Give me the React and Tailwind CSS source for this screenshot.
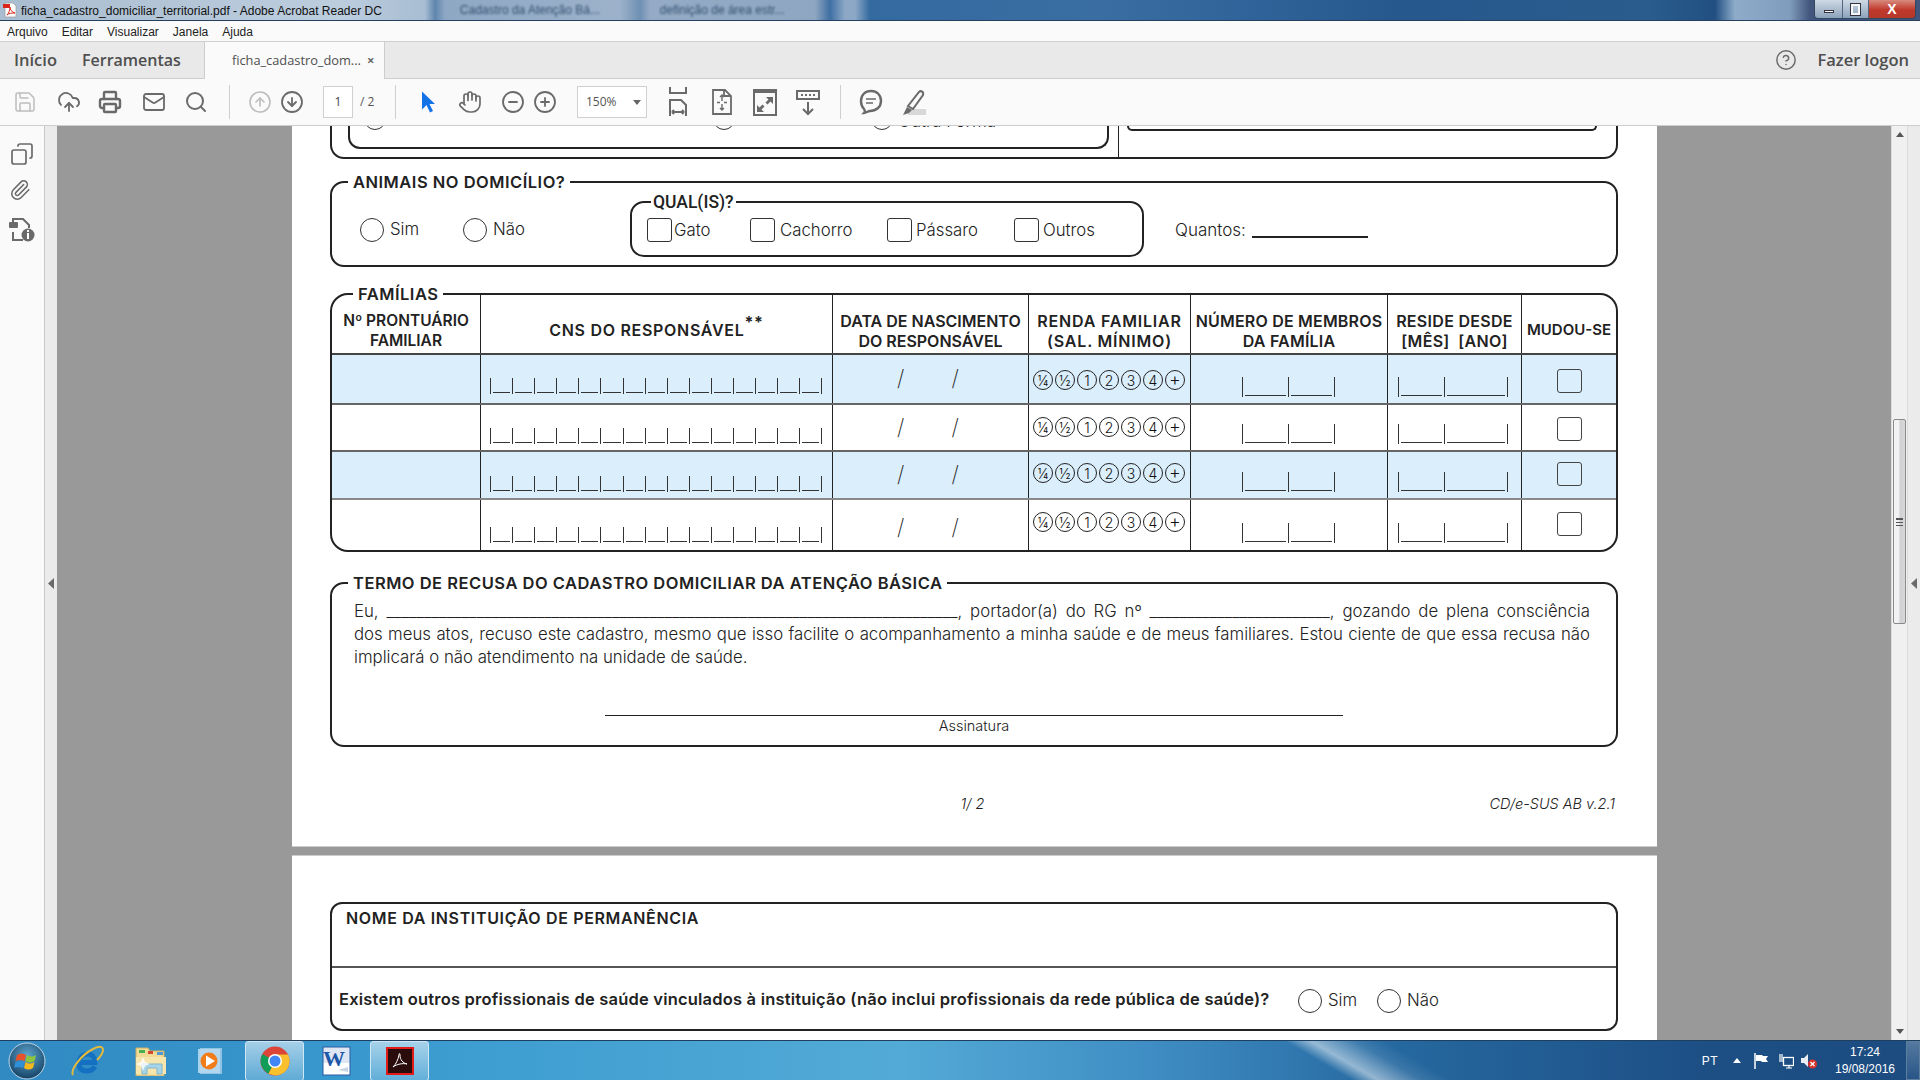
import {
  Save, CloudUpload, Printer, Mail, Search, CircleArrowUp, CircleArrowDown, Hand,
  CircleMinus, CirclePlus, CircleHelp, Copy, Paperclip,
} from 'lucide-react';

const TB = 'text-[#6a6a6a] shrink-0';

// linhas da tabela de famílias
const ROWS = [
  { bg: 'bg-[#dbeefc]', h: 'h-[50px] border-b-2 border-[#666]', cns: 'pb-[9px]', tick: 'pb-[6px]', slash: 'pt-[12px]', circ: 'pt-[15px]', check: 'pt-[14px]' },
  { bg: '', h: 'h-[47px] border-b-2 border-[#666]', cns: 'pb-[6px]', tick: 'pb-[6px]', slash: 'pt-[11px]', circ: 'pt-[12px]', check: 'pt-[12px]' },
  { bg: 'bg-[#dbeefc]', h: 'h-[48px] border-b-2 border-[#888]', cns: 'pb-[6px]', tick: 'pb-[6px]', slash: 'pt-[11px]', circ: 'pt-[11px]', check: 'pt-[10px]' },
  { bg: '', h: 'h-[50px]', cns: 'pb-[7px]', tick: 'pb-[7px]', slash: 'pt-[16px]', circ: 'pt-[12px]', check: 'pt-[12px]' },
];

const COLS = 'grid grid-cols-[149px_352px_196px_162px_197px_134px_94px]';
const CELL = 'border-r border-[#222]';

function Radio({ label, className = '' }) {
  return (
    <div className={`flex items-center shrink-0 ${className}`}>
      <span className="w-[24px] h-[24px] rounded-full border border-[#333] shrink-0" />
      {label && <span className="ml-[6px] text-[16.8px] font-light text-[#222]">{label}</span>}
    </div>
  );
}

function Check({ label, className = '', gap = 'ml-[4px]' }) {
  return (
    <div className={`flex items-center shrink-0 ${className}`}>
      <span className="w-[25px] h-[24px] rounded-[3px] border border-[#333] shrink-0" />
      {label && <span className={`${gap} text-[16.8px] font-light text-[#222] translate-y-px`}>{label}</span>}
    </div>
  );
}

function Ticks({ widths, height }) {
  return (
    <div className={`flex border-r border-[#333] ${height}`}>
      {widths.map((w, i) => (
        <span key={i} className="border-l border-[#333] flex items-end px-[2px] pb-[1px]" style={{ width: w }}>
          <span className="block h-px w-full bg-[#333]" />
        </span>
      ))}
    </div>
  );
}

function Legend({ children, className = '' }) {
  return (
    <legend className={`h-[18px] leading-[18px] text-[16.5px] font-semibold text-[#222] tracking-[0.5px] px-[5px] whitespace-nowrap ${className}`}>
      {children}
    </legend>
  );
}

function HeadCell({ children, className = '' }) {
  return (
    <div className={`text-center leading-[20px] font-semibold text-[#222] whitespace-nowrap ${className}`}>
      {children}
    </div>
  );
}

function FamilyRow({ row }) {
  const circles = ['¼', '½', '1', '2', '3', '4', '+'];
  return (
    <div className={`${COLS} ${row.bg} ${row.h}`}>
      <div className={CELL} />
      <div className={`${CELL} flex items-end pl-[9px] ${row.cns}`}>
        <Ticks widths={Array(15).fill(22.1)} height="h-[16px]" />
      </div>
      <div className={`${CELL} flex pl-[64px] gap-[47px] text-[22px] leading-[22px] font-extralight text-[#222] ${row.slash}`}>
        <span>/</span>
        <span>/</span>
      </div>
      <div className={`${CELL} flex pl-[4px] gap-[2px] ${row.circ}`}>
        {circles.map((c) => (
          <span key={c} className={`w-[20px] h-[20px] rounded-full border border-[#222] flex items-center justify-center font-light text-[#111] ${c === '+' ? 'text-[18px] leading-none' : 'text-[14px]'}`}>
            {c}
          </span>
        ))}
      </div>
      <div className={`${CELL} flex items-end pl-[51px] ${row.tick}`}>
        <Ticks widths={[46, 46]} height="h-[20px]" />
      </div>
      <div className={`${CELL} flex items-end pl-[10px] ${row.tick}`}>
        <Ticks widths={[46, 63]} height="h-[20px]" />
      </div>
      <div className={`flex pl-[35px] ${row.check}`}>
        <span className="w-[25px] h-[24px] rounded-[3px] border border-[#444]" />
      </div>
    </div>
  );
}

function PdfIcon() {
  return (
    <svg width="14" height="16" viewBox="0 0 14 16" className="shrink-0">
      <path d="M2 1h8l3 3v11H2z" fill="#fff" stroke="#999" strokeWidth="0.7" />
      <rect x="0" y="2" width="7" height="4" fill="#d8261c" />
      <path d="M4 13c2-2 3-5 3-8 0 3 2 5 5 6-3 0-6 0-8 2z" fill="none" stroke="#d8261c" />
    </svg>
  );
}

function TitleBar() {
  return (
    <div className="h-[21px] shrink-0 flex items-center bg-[linear-gradient(90deg,#a9bdd0_0px,#bccdde_340px,#a8bdd3_425px,#5f86ad_435px,#8ea7c4_445px,#9db2ca_620px,#6f90b3_640px,#95abc5_650px,#8ea6c1_815px,#3f6fa3_830px,#8da8c6_845px,#8da8c6_855px,#336a9f_870px,#3a6ea3_1100px,#26588e_1400px,#2a5c8d_1650px,#214f82_1715px,#8eacca_1735px,#7f9cbc_1790px,#42557c_1810px)] border-b border-[#24405f] text-[12px] font-['Liberation_Sans',sans-serif] text-[#111] overflow-hidden">
      <div className="ml-[3px]"><PdfIcon /></div>
      <span className="ml-[4px] whitespace-nowrap translate-y-px">ficha_cadastro_domiciliar_territorial.pdf - Adobe Acrobat Reader DC</span>
      <span className="ml-[78px] w-[170px] whitespace-nowrap text-[#33506f] blur-[1.2px]">Cadastro da Atenção Bá...</span>
      <span className="ml-[30px] w-[150px] whitespace-nowrap text-[#33506f] blur-[1.2px]">definição de área estr...</span>
      <div className="ml-auto flex items-start self-start h-[19px] mr-[4px] rounded-b-[4px] border border-t-0 border-[#33465f] overflow-hidden">
        <span className="w-[28px] h-[18px] bg-[linear-gradient(180deg,#cfd9e4,#8ca2bb)] flex items-center justify-center border-r border-[#51657f]">
          <span className="w-[10px] h-[3px] bg-white border border-[#334] mt-[5px]" />
        </span>
        <span className="w-[26px] h-[18px] bg-[linear-gradient(180deg,#cfd9e4,#8ca2bb)] flex items-center justify-center border-r border-[#51657f]">
          <span className="w-[9px] h-[11px] bg-transparent border-2 border-[#f4f6f8] outline outline-[#334]" />
        </span>
        <span className="w-[46px] h-[18px] bg-[linear-gradient(180deg,#d88a7e,#c0392b_55%,#b5382a)] flex items-center justify-center text-white font-bold text-[14px] leading-none">X</span>
      </div>
    </div>
  );
}

function MenuBar() {
  return (
    <div className="h-[21px] shrink-0 bg-[#fafafa] border-b border-[#cfcfcf] flex items-center pl-[7px] pt-[2px] gap-[14px] text-[12px] text-[#222] font-['Liberation_Sans',sans-serif]">
      <span>Arquivo</span>
      <span>Editar</span>
      <span>Visualizar</span>
      <span>Janela</span>
      <span>Ajuda</span>
    </div>
  );
}

function TabBar() {
  return (
    <div className="h-[37px] shrink-0 bg-[#e9e9e9] border-b border-[#cdcdcd] flex items-stretch font-['Open_Sans',sans-serif] text-[#4f4f4f]">
      <span className="ml-[14px] self-center text-[16.5px] font-semibold">Início</span>
      <span className="ml-[25px] self-center text-[16px] font-semibold">Ferramentas</span>
      <div className="ml-[23px] w-[181px] h-[37px] bg-[#fafafa] border-x border-[#cdcdcd] flex items-center pl-[27px] text-[12.8px] -mb-px">
        <span className="whitespace-nowrap">ficha_cadastro_dom...</span>
        <span className="ml-[6px] text-[13px] font-bold text-[#666]">×</span>
      </div>
      <CircleHelp size={22} strokeWidth={1.6} className="ml-auto self-center text-[#6a6a6a]" />
      <span className="ml-[20px] mr-[11px] self-center text-[16.5px] font-semibold">Fazer logon</span>
    </div>
  );
}

function Sep({ className = '' }) {
  return <span className={`w-px h-[34px] bg-[#cfcfcf] shrink-0 ${className}`} />;
}

function Toolbar() {
  return (
    <div className="h-[47px] shrink-0 bg-[#fafafa] border-b border-[#cdcdcd] flex items-center font-['Open_Sans',sans-serif]">
      <Save size={24} strokeWidth={1.5} className="ml-[13px] text-[#bdbdbd] shrink-0" />
      <CloudUpload size={24} strokeWidth={1.8} className={`ml-[20px] ${TB}`} />
      <Printer size={24} strokeWidth={2.4} className={`ml-[17px] ${TB}`} />
      <Mail size={24} strokeWidth={1.8} className={`ml-[20px] ${TB}`} />
      <Search size={24} strokeWidth={2} className={`ml-[18px] ${TB}`} />
      <Sep className="ml-[21px]" />
      <CircleArrowUp size={24} strokeWidth={1.6} className="ml-[18px] text-[#bdbdbd] shrink-0" />
      <CircleArrowDown size={24} strokeWidth={1.8} className={`ml-[8px] ${TB}`} />
      <span className="ml-[19px] w-[30px] h-[32px] bg-white border border-[#d0d0d0] flex items-center justify-center text-[12px] text-[#444]">1</span>
      <span className="ml-[7px] w-[16px] whitespace-nowrap text-[12px] text-[#555]">/ 2</span>
      <Sep className="ml-[19px]" />
      <svg width="24" height="24" viewBox="0 0 24 24" className="ml-[19px] shrink-0">
        <path d="M7 1.5v18l4.5-4.5 3.5 7.5 3-1.5-3.5-7H20z" fill="#1473e6" />
      </svg>
      <Hand size={24} strokeWidth={1.7} className={`ml-[19px] ${TB}`} />
      <CircleMinus size={24} strokeWidth={1.8} className={`ml-[19px] ${TB}`} />
      <CirclePlus size={24} strokeWidth={1.8} className={`ml-[8px] ${TB}`} />
      <div className="ml-[20px] w-[70px] h-[32px] bg-white border border-[#d0d0d0] flex items-center pl-[8px] text-[12px] text-[#555]">
        150%
        <svg width="8" height="5" viewBox="0 0 8 5" className="ml-auto mr-[5px]"><path d="M0 0h8L4 5z" fill="#666" /></svg>
      </div>
      <svg width="24" height="30" viewBox="0 0 24 30" fill="none" stroke="#6a6a6a" strokeWidth="2" className="ml-[19px] shrink-0">
        <path d="M4 0v6h16V0M4 29V13h11l5 5v11M6 25h12M6 25l2-2M6 25l2 2M18 25l-2-2M18 25l-2 2" />
      </svg>
      <svg width="24" height="28" viewBox="0 0 24 28" fill="none" stroke="#6a6a6a" strokeWidth="2" className="ml-[20px] shrink-0">
        <path d="M3 2h12l6 6v18H3zM14 2v6h7" strokeWidth="1.8" />
        <path d="M12 7v6M12 16v6M7 14.500h3M14 14.500h3M10 9l2-2 2 2M10 20l2 2 2-2" strokeWidth="1.4" />
      </svg>
      <svg width="24" height="28" viewBox="0 0 24 28" className="ml-[19px] shrink-0">
        <rect x="1" y="2" width="22" height="25" fill="none" stroke="#6a6a6a" strokeWidth="2" />
        <rect x="1" y="2" width="22" height="3" fill="#6a6a6a" />
        <path d="M13 9h7v7l-2.5-2.5-3 3-2-2 3-3zM11 24H4v-7l2.5 2.5 3-3 2 2-3 3z" fill="#6a6a6a" />
      </svg>
      <svg width="24" height="28" viewBox="0 0 24 28" className="ml-[19px] shrink-0">
        <rect x="1" y="3" width="22" height="8" fill="none" stroke="#6a6a6a" strokeWidth="2" />
        <path d="M5 6h2v2H5zM9 6h2v2H9zM13 6h2v2h-2zM17 6h2v2h-2z" fill="#6a6a6a" />
        <path d="M12 14v12M7 21l5 5 5-5" fill="none" stroke="#6a6a6a" strokeWidth="2" />
      </svg>
      <Sep className="ml-[20px]" />
      <svg width="24" height="28" viewBox="0 0 24 28" fill="none" stroke="#6a6a6a" strokeWidth="2.4" className="ml-[18px] shrink-0">
        <path d="M12 3c6 0 10 4 10 10s-5 10-11 10c-2 0-4 2-6 2 1-1 1-3 0-4-2-2-3-5-3-8C2 7 6 3 12 3z" />
        <path d="M7 11h10M7 15h7" strokeWidth="1.4" />
      </svg>
      <svg width="24" height="28" viewBox="0 0 24 28" className="ml-[19px] shrink-0">
        <rect x="6" y="21" width="18" height="6" fill="#d8d8d8" />
        <path d="M6 18 17 4c2-2 5 0 4 3L11 21z" fill="none" stroke="#6a6a6a" strokeWidth="2" />
        <path d="M5 19l5 3-3 3-6 2z" fill="#6a6a6a" />
      </svg>
    </div>
  );
}

function SidePanel() {
  return (
    <div className="w-[45px] shrink-0 bg-[#fafafa] border-r border-[#c8c8c8] flex flex-col items-center pt-[16px] text-[#6a6a6a]">
      <Copy size={24} strokeWidth={1.7} className="-scale-x-100" />
      <Paperclip size={22} strokeWidth={1.7} className="mt-[13px] ml-[-4px]" />
      <svg width="26" height="26" viewBox="0 0 26 26" className="mt-[15px]">
        <path d="M4 11V3h10l6 6v3M4 16v8h10" fill="none" stroke="#6a6a6a" strokeWidth="2" />
        <rect x="0" y="6" width="9" height="6" rx="1" fill="#6a6a6a" />
        <circle cx="19" cy="19" r="6.5" fill="#6a6a6a" />
        <path d="M18 17h2v6h-2zM18 14h2v2h-2z" fill="#fff" />
      </svg>
    </div>
  );
}

function Strip() {
  return (
    <div className="w-[12px] shrink-0 bg-[#ebebeb] flex items-center justify-center">
      <svg width="6" height="11" viewBox="0 0 6 11"><path d="M6 0v11L0 5.5z" fill="#6a6a6a" /></svg>
    </div>
  );
}

function ScrollBar() {
  return (
    <div className="w-[17px] shrink-0 bg-[#f0f0f0] border-x border-[#dcdcdc] flex flex-col">
      <div className="h-[17px] flex items-center justify-center">
        <svg width="8" height="5" viewBox="0 0 8 5"><path d="M4 0l4 5H0z" fill="#555" /></svg>
      </div>
      <div className="mt-[276px] h-[205px] mx-[1px] rounded-[2px] border border-[#8a8a8a] bg-[linear-gradient(90deg,#f4f4f4,#f0f0f0_45%,#cfcfd2_55%,#d8d8da)] flex items-center justify-center">
        <span className="w-[7px] h-[8px] border-y border-[#555] bg-[linear-gradient(180deg,#555_0,#555_1px,transparent_1px,transparent_3px,#555_3px,#555_4px,transparent_4px)]" />
      </div>
      <div className="mt-auto h-[17px] flex items-center justify-center">
        <svg width="8" height="5" viewBox="0 0 8 5"><path d="M0 0h8L4 5z" fill="#555" /></svg>
      </div>
    </div>
  );
}

function Animais() {
  return (
    <fieldset className="mt-[14px] w-[1288px] h-[94px] border-2 border-[#222] rounded-[14px]">
      <Legend className="ml-[16px]">ANIMAIS NO DOMICÍLIO?</Legend>
      <div className="flex items-start pl-[28px] text-[#222]">
        <Radio label="Sim" className="w-[103px] mt-[26px]" />
        <Radio label="Não" className="w-[167px] mt-[26px]" />
        <fieldset className="mt-[2px] w-[514px] h-[64px] border-2 border-[#222] rounded-[14px] pl-[15px]">
          <legend className="h-[18px] leading-[18px] ml-[4px] px-[2px] text-[17.5px] font-medium font-['Roboto',sans-serif] text-[#222]">QUAL(IS)?</legend>
          <div className="flex mt-[6px]">
            <Check label="Gato" gap="ml-[2px]" className="w-[103px]" />
            <Check label="Cachorro" gap="ml-[5px]" className="w-[137px]" />
            <Check label="Pássaro" className="w-[127px]" />
            <Check label="Outros" />
          </div>
        </fieldset>
        <span className="ml-[31px] mt-[27px] text-[17px] font-light leading-[24px]">Quantos:</span>
        <span className="ml-[6px] mt-[45px] w-[116px] border-b-2 border-[#222]" />
      </div>
    </fieldset>
  );
}

function Familias() {
  return (
    <fieldset className="mt-[18px] w-[1288px] h-[267px] border-2 border-[#222] rounded-[18px]">
      <Legend className="ml-[21px]">FAMÍLIAS</Legend>
      <div className="-mt-[8px]">
        <div className={`${COLS} h-[60px] border-b-2 border-[#444]`}>
          <HeadCell className={`${CELL} pt-[16px] text-[15.500px]`}>Nº PRONTUÁRIO<br />FAMILIAR</HeadCell>
          <HeadCell className={`${CELL} pt-[25px] text-[16px] tracking-[0.7px]`}>
            CNS DO RESPONSÁVEL<sup className="text-[16px] font-bold">**</sup>
          </HeadCell>
          <HeadCell className={`${CELL} pt-[16px] text-[16px]`}>DATA DE NASCIMENTO<br />DO RESPONSÁVEL</HeadCell>
          <HeadCell className={`${CELL} pt-[16px] text-[16px] tracking-[0.8px]`}>RENDA FAMILIAR<br />(SAL. MÍNIMO)</HeadCell>
          <HeadCell className={`${CELL} pt-[16px] text-[16px] tracking-[0.2px]`}>NÚMERO DE MEMBROS<br />DA FAMÍLIA</HeadCell>
          <HeadCell className={`${CELL} pt-[16px] text-[16px] tracking-[0.3px]`}>RESIDE DESDE<br />[MÊS]&nbsp; [ANO]</HeadCell>
          <HeadCell className="pt-[25px] text-[15px]">MUDOU-SE</HeadCell>
        </div>
        {ROWS.map((row, i) => (
          <FamilyRow key={i} row={row} />
        ))}
      </div>
    </fieldset>
  );
}

function Termo() {
  const line = 'w-[1236px] whitespace-nowrap [text-align:justify] [text-align-last:justify]';
  return (
    <fieldset className="mt-[22px] w-[1288px] h-[173px] border-2 border-[#222] rounded-[14px]">
      <Legend className="ml-[16px]">TERMO DE RECUSA DO CADASTRO DOMICILIAR DA ATENÇÃO BÁSICA</Legend>
      <div className="mt-[8px] ml-[22px] text-[16.800px] leading-[23px] font-light text-[#222]">
        <p className={line}>Eu, {'_'.repeat(76)}, portador(a) do RG nº {'_'.repeat(24)}, gozando de plena consciência</p>
        <p className={line}>dos meus atos, recuso este cadastro, mesmo que isso facilite o acompanhamento a minha saúde e de meus familiares. Estou ciente de que essa recusa não</p>
        <p>implicará o não atendimento na unidade de saúde.</p>
      </div>
      <div className="mt-[46px] mx-auto w-[738px] border-t border-[#222] text-center text-[14.500px] leading-[20px] font-light text-[#222]">
        Assinatura
      </div>
    </fieldset>
  );
}

function Page() {
  return (
    <div className="w-[1365px] h-[721px] bg-white border-b border-[#ccc] pl-[38px] flex flex-col font-['Inter',sans-serif]">
      <div className="w-[1288px] h-[33px] shrink-0 border-2 border-t-0 border-[#222] rounded-b-[14px] flex overflow-hidden">
        <div className="w-[786px] pl-[16px]">
          <div className="w-[761px] h-[23px] border-2 border-t-0 border-[#222] rounded-b-[12px] flex items-start overflow-hidden text-[17px] font-light text-[#222]">
            <span className="ml-[14px] -mt-[20px] w-[22px] h-[24px] rounded-full border border-[#333] shrink-0" />
            <span className="ml-[14px] -mt-[20px] w-[300px] whitespace-nowrap leading-[20px]">Direto, para rio, lago ou mar</span>
            <span className="-mt-[20px] ml-[13px] w-[22px] h-[24px] rounded-full border border-[#333] shrink-0" />
            <span className="-mt-[20px] ml-[136px] w-[22px] h-[24px] rounded-full border border-[#333] shrink-0" />
            <span className="ml-[5px] -mt-[15px] whitespace-nowrap leading-[20px]">Outra Forma</span>
          </div>
        </div>
        <div className="flex-1 border-l border-[#222] pl-[8px]">
          <div className="w-[470px] h-[5px] border-2 border-t-0 border-[#222] rounded-b-[5px]" />
        </div>
      </div>
      <Animais />
      <Familias />
      <Termo />
      <div className="mt-[46px] w-[1285px] grid grid-cols-3 items-center text-[14.500px] italic font-light text-[#222]">
        <span />
        <span className="text-center">1/ 2</span>
        <span className="text-right">CD/e-SUS AB v.2.1</span>
      </div>
    </div>
  );
}

function Page2() {
  return (
    <div className="w-[1365px] h-[185px] mt-[8px] bg-white border-t border-[#ccc] pl-[38px] pt-[46px] font-['Inter',sans-serif]">
      <div className="w-[1288px] h-[129px] border-2 border-[#222] rounded-[12px] flex flex-col">
        <div className="h-[64px] border-b-2 border-[#555] pl-[14px] pt-[4px] text-[16px] tracking-[0.65px] leading-[20px] font-semibold text-[#222]">
          NOME DA INSTITUIÇÃO DE PERMANÊNCIA
        </div>
        <div className="flex items-center pl-[7px] mt-[19px]">
          <span className="w-[930px] whitespace-nowrap text-[16.500px] tracking-[0.2px] font-semibold text-[#222]">
            Existem outros profissionais de saúde vinculados à instituição (não inclui profissionais da rede pública de saúde)?
          </span>
          <Radio label="Sim" className="ml-[29px] w-[79px] translate-y-px" />
          <Radio label="Não" className="translate-y-px" />
        </div>
      </div>
    </div>
  );
}

function Viewer() {
  return (
    <div className="flex-1 min-h-0 flex overflow-hidden">
      <SidePanel />
      <Strip />
      <div className="flex-1 bg-[#999] pl-[235px] overflow-hidden">
        <Page />
        <Page2 />
      </div>
      <ScrollBar />
      <Strip />
    </div>
  );
}

function TaskIcon({ children, active, className = '' }) {
  return (
    <div className={`h-[40px] flex items-center justify-center shrink-0 ${active ? 'rounded-[3px] border border-[#cfe6f5] bg-[linear-gradient(180deg,rgba(255,255,255,0.55),rgba(255,255,255,0.2))]' : ''} ${className}`}>
      {children}
    </div>
  );
}

function Taskbar() {
  return (
    <div className="h-[40px] shrink-0 border-t border-[#1f3f60] flex items-center text-white font-['Liberation_Sans',sans-serif] bg-[linear-gradient(30deg,transparent_676px,rgba(255,255,255,0.5)_689px,rgba(255,255,255,0.1)_711px,transparent_726px),linear-gradient(90deg,#3189c2_0px,#3a9bd0_400px,#53aad6_900px,#3f8dc4_1150px,#25689f_1400px,#1d4f85_1700px,#1c4c80_1920px)]">
      <svg width="38" height="38" viewBox="0 0 38 38" className="ml-[8px] shrink-0">
        <defs>
          <radialGradient id="orb" cx="50%" cy="35%" r="70%">
            <stop offset="0" stopColor="#5fa6cf" />
            <stop offset="1" stopColor="#0f3a5c" />
          </radialGradient>
        </defs>
        <circle cx="19" cy="19" r="18" fill="url(#orb)" stroke="#bcd6e6" />
        <path d="M9 13c3-2 6-2 9 0l-1.500 6c-3-1.500-6-1.500-9 0z" fill="#e8522a" />
        <path d="M19 13c3 2 6 2 9 0l-1.500 6c-3 2-6 2-9 0z" fill="#8cc63f" />
        <path d="M7.500 20c3-1.500 6-1.500 9 0L15 26c-3-1.500-6-1.500-9 0z" fill="#2f8fd8" />
        <path d="M17.500 20c3 2 6 2 9 0L25 26c-3 2-6 2-9 0z" fill="#f6b81e" />
      </svg>
      <TaskIcon className="ml-[24px] w-[36px]">
        <svg width="34" height="34" viewBox="0 0 34 34" fill="none">
          <path d="M9 18.500h15c0-5-3-8.500-7.500-8.500C11.500 10 8 14 8 19.500S11.500 27 16 27c3 0 6-1.500 8-4.500" stroke="#1470c0" strokeWidth="5" />
          <path d="M2 31c-3-5 8-20 20-26 6-3 10-3 10 1 0 3-3 7-6 10" stroke="#e3b93d" strokeWidth="2" />
        </svg>
      </TaskIcon>
      <TaskIcon className="ml-[28px] w-[34px]">
        <svg width="32" height="30" viewBox="0 0 32 30">
          <path d="M1 2h12l2 3h14v25H1z" fill="#f1dc97" stroke="#c9ae62" />
          <rect x="4" y="4" width="6" height="3" fill="#4cb050" />
          <rect x="13" y="5" width="5" height="3" fill="#d2492f" />
          <rect x="22" y="6" width="6" height="3" fill="#4f97d6" />
          <path d="M1 11h30v17H1z" fill="#f6e6ae" />
          <path d="M7 28V18h20v10h-5v-6H12v6z" fill="#a8d4e8" stroke="#7fb6cf" />
          <path d="M8 11l2 5 5 2-5 2-2 5-2-5-5-2 5-2z" fill="#fff" opacity="0.8" />
        </svg>
      </TaskIcon>
      <TaskIcon className="ml-[29px] w-[30px]">
        <svg width="28" height="28" viewBox="0 0 28 28">
          <rect x="2" y="1" width="22" height="26" fill="#8fc3e3" />
          <rect x="0" y="2" width="22" height="24" fill="#b7d9ee" opacity="0.9" />
          <circle cx="11" cy="14" r="8.500" fill="#f07c1a" />
          <path d="M8 8.500 17 14l-9 5.500z" fill="#fff" />
        </svg>
      </TaskIcon>
      <TaskIcon active className="ml-[18px] w-[59px]">
        <svg width="30" height="30" viewBox="0 0 30 30">
          <circle cx="15" cy="15" r="14.500" fill="#db4437" />
          <path d="M2.400 8 15 15l-6.500 12.700A14.500 14.500 0 0 1 2.400 8z" fill="#0f9d58" />
          <path d="M15 8.500h13A14.500 14.500 0 0 1 15 29.500l-6.500-1.800L15 15z" fill="#fbc02d" />
          <circle cx="15" cy="15" r="7" fill="#fff" />
          <circle cx="15" cy="15" r="5.500" fill="#4285f4" />
        </svg>
      </TaskIcon>
      <TaskIcon className="w-[66px]">
        <svg width="30" height="30" viewBox="0 0 30 30">
          <rect x="1" y="1" width="27" height="28" fill="#fff" stroke="#2a5aa0" />
          <rect x="1" y="1" width="27" height="16" fill="#1e56a8" opacity="0.15" />
          <text x="1" y="20" fontSize="22" fontWeight="700" fontFamily="Liberation Serif, serif" fill="#1e56a8">W</text>
          <path d="M16 24l10-3v5z" fill="#c9d6e6" />
        </svg>
      </TaskIcon>
      <TaskIcon active className="w-[59px]">
        <span className="w-[28px] h-[28px] bg-[#2a0c0c] border-2 border-[#e31b16] flex items-center justify-center">
          <svg width="20" height="20" viewBox="0 0 20 20" fill="none" stroke="#fff" strokeWidth="1">
            <path d="M3 16c3-3 5-7 6-12 0-2 1-2 1 0 0 5 3 8 7 9-4-1-10 0-14 3z" />
          </svg>
        </span>
      </TaskIcon>
      <span className="ml-auto text-[12px] tracking-[0.5px]">PT</span>
      <svg width="8" height="5" viewBox="0 0 8 5" className="ml-[15px]"><path d="M4 0l4 5H0z" fill="#fff" /></svg>
      <svg width="16" height="16" viewBox="0 0 16 16" className="ml-[12px]">
        <path d="M2 0v16" stroke="#fff" strokeWidth="1.500" />
        <path d="M3 2h6l1 1h5l-2 3 2 3H9L8 8H3z" fill="#fff" />
      </svg>
      <svg width="16" height="16" viewBox="0 0 16 16" fill="none" stroke="#fff" className="ml-[9px]">
        <rect x="5.500" y="4.500" width="10" height="8" strokeWidth="1.300" />
        <path d="M8 15h6M11 13v2M2 1v8M4 1v8" strokeWidth="1.200" />
      </svg>
      <svg width="16" height="16" viewBox="0 0 16 16" className="ml-[7px]">
        <path d="M0 5h3l4-4v13l-4-4H0z" fill="#e8eef4" />
        <circle cx="11.500" cy="11" r="4.500" fill="#d8322a" />
        <path d="M9.500 9l4 4M13.500 9l-4 4" stroke="#fff" strokeWidth="1.300" />
      </svg>
      <div className="ml-[13px] w-[70px] text-center text-[12px] leading-[17px] whitespace-nowrap">
        <div>17:24</div>
        <div>19/08/2016</div>
      </div>
      <span className="ml-[6px] w-[14px] h-[39px] border border-[#5d7f9f] bg-[linear-gradient(180deg,rgba(255,255,255,0.25),rgba(255,255,255,0.05))] shrink-0" />
    </div>
  );
}

export default function App() {
  return (
    <div className="w-[1920px] h-[1080px] flex flex-col overflow-hidden bg-[#999]">
      <TitleBar />
      <MenuBar />
      <TabBar />
      <Toolbar />
      <Viewer />
      <Taskbar />
    </div>
  );
}
